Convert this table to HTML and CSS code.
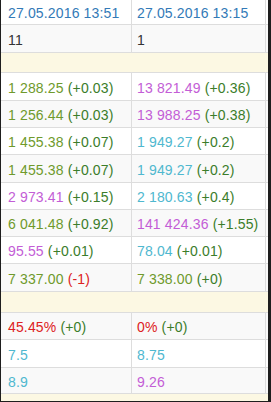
FILE: index.html
```html
<!DOCTYPE html>
<html lang="ru">
<head>
<meta charset="utf-8">
<title>Сравнение</title>
<link rel="stylesheet" href="styles.css">
</head>
<body>
<div class="frame">
  <div class="row hdr">
    <div class="c1"><p><span class="blue">27.05.2016 13:51</span></p></div>
    <div class="c2"><p><span class="blue">27.05.2016 13:15</span></p></div>
  </div>
  <div class="row r28 gray">
    <div class="c1"><p><span class="dark">11</span></p></div>
    <div class="c2"><p><span class="dark">1</span></p></div>
  </div>
  <div class="row cream h20"></div>
  <div class="row r28">
    <div class="c1"><p><span class="ol">1 288.25</span> <span class="gr">(+0.03)</span></p></div>
    <div class="c2"><p><span class="pu">13 821.49</span> <span class="gr">(+0.36)</span></p></div>
  </div>
  <div class="row r27 gray">
    <div class="c1"><p><span class="ol">1 256.44</span> <span class="gr">(+0.03)</span></p></div>
    <div class="c2"><p><span class="pu">13 988.25</span> <span class="gr">(+0.38)</span></p></div>
  </div>
  <div class="row r27">
    <div class="c1"><p><span class="ol">1 455.38</span> <span class="gr">(+0.07)</span></p></div>
    <div class="c2"><p><span class="cy">1 949.27</span> <span class="gr">(+0.2)</span></p></div>
  </div>
  <div class="row r28 gray">
    <div class="c1"><p><span class="ol">1 455.38</span> <span class="gr">(+0.07)</span></p></div>
    <div class="c2"><p><span class="cy">1 949.27</span> <span class="gr">(+0.2)</span></p></div>
  </div>
  <div class="row r27">
    <div class="c1"><p><span class="pu">2 973.41</span> <span class="gr">(+0.15)</span></p></div>
    <div class="c2"><p><span class="cy">2 180.63</span> <span class="gr">(+0.4)</span></p></div>
  </div>
  <div class="row r27 gray">
    <div class="c1"><p><span class="ol">6 041.48</span> <span class="gr">(+0.92)</span></p></div>
    <div class="c2"><p><span class="pu">141 424.36</span> <span class="gr">(+1.55)</span></p></div>
  </div>
  <div class="row r27">
    <div class="c1"><p><span class="pu">95.55</span> <span class="gr">(+0.01)</span></p></div>
    <div class="c2"><p><span class="cy">78.04</span> <span class="gr">(+0.01)</span></p></div>
  </div>
  <div class="row r28 gray">
    <div class="c1"><p><span class="ol">7 337.00</span> <span class="rd">(-1)</span></p></div>
    <div class="c2"><p><span class="ol">7 338.00</span> <span class="gr">(+0)</span></p></div>
  </div>
  <div class="row cream h21"></div>
  <div class="row r27 gray">
    <div class="c1"><p><span class="rd">45.45%</span> <span class="gr">(+0)</span></p></div>
    <div class="c2"><p><span class="rd">0%</span> <span class="gr">(+0)</span></p></div>
  </div>
  <div class="row r28">
    <div class="c1"><p><span class="cy">7.5</span></p></div>
    <div class="c2"><p><span class="cy">8.75</span></p></div>
  </div>
  <div class="row r26 gray">
    <div class="c1"><p><span class="cy">8.9</span></p></div>
    <div class="c2"><p><span class="pu">9.26</span></p></div>
  </div>
  <div class="row cream rest"></div>
</div>
</body>
</html>
```

FILE: styles.css
```css
html, body {
  margin: 0;
  padding: 0;
  background: #ffffff;
}

.frame {
  width: 271px;
  height: 402px;
  box-sizing: border-box;
  border-left: 1px solid #1e1e1e;
  border-right: 3px solid #1e1e1e;
  border-bottom: 1px solid #1e1e1e;
  background: #ffffff;
  overflow: hidden;
  display: flex;
  flex-direction: column;
  font-family: "Liberation Sans", Arial, sans-serif;
  font-size: 14px;
  letter-spacing: 0.15px;
  color: #333333;
}

.row {
  display: grid;
  grid-template-columns: 131px 134px 1fr;
  box-sizing: border-box;
  border-bottom: 1px solid #dddddd;
  flex: none;
}

.row > div {
  box-sizing: border-box;
  border-right: 1px solid #dddddd;
  display: flex;
  align-items: center;
  padding-top: 2px;
  overflow: hidden;
}

.row p {
  margin: 0;
  white-space: nowrap;
  line-height: 16px;
}

.c1 { padding-left: 7px; }
.c2 { padding-left: 5px; }

.hdr { height: 25px; }
.r28 { height: 28px; }
.r27 { height: 27px; }
.r26 { height: 26px; }
.h20 { height: 20px; }
.h21 { height: 21px; }
.rest { flex: 1; border-bottom: none; }

.gray { background: #f9f9f9; }
.cream { background: #fcf8e3; }

.blue { color: #337ab7; }
.dark { color: #333333; }
.ol { color: #6f9a2c; }
.gr { color: #3b7d2a; }
.pu { color: #c35dd6; }
.cy { color: #4fb8cf; }
.rd { color: #dd2222; }
```
